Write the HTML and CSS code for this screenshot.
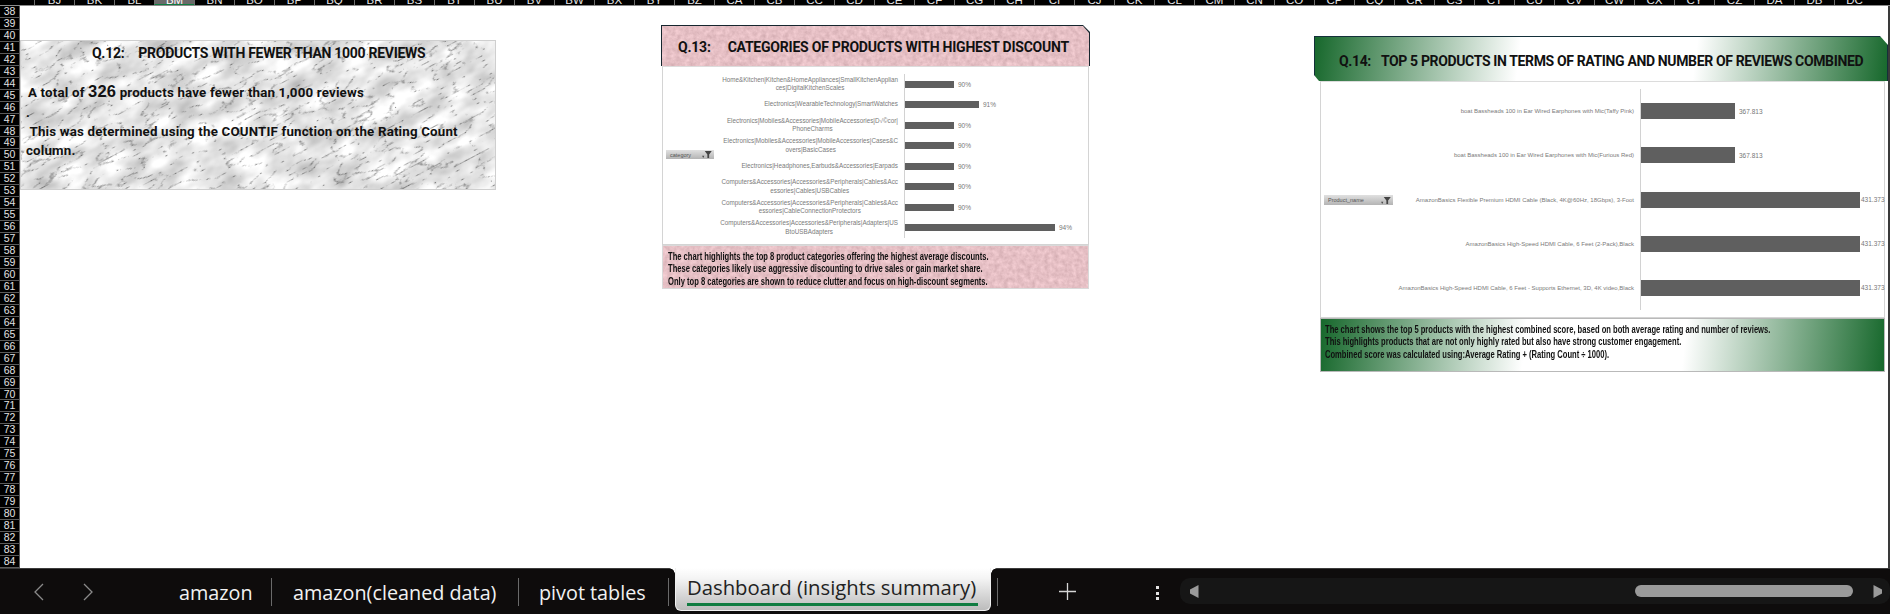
FILE: index.html
```html
<!DOCTYPE html>
<html lang="en">
<head>
<meta charset="utf-8">
<title>Dashboard (insights summary)</title>
<link rel="stylesheet" href="styles.css">
</head>
<body>
<svg class="defs" width="0" height="0" aria-hidden="true">
  <defs>
    <filter id="marble" x="0" y="0" width="100%" height="100%" color-interpolation-filters="sRGB">
      <feTurbulence type="fractalNoise" baseFrequency="0.03 0.05" numOctaves="3" seed="5" result="cloud"/>
      <feColorMatrix in="cloud" type="matrix" values="0.45 0 0 0 0.68  0.45 0 0 0 0.68  0.45 0 0 0 0.68  0 0 0 0 1" result="base"/>
      <feTurbulence type="turbulence" baseFrequency="0.04 0.1" numOctaves="4" seed="11"/>
      <feColorMatrix type="matrix" values="2.6 0 0 0 0.55  2.6 0 0 0 0.55  2.6 0 0 0 0.55  0 0 0 0 1" result="veins"/>
      <feBlend in="base" in2="veins" mode="multiply"/>
      <feGaussianBlur stdDeviation="0.5"/>
    </filter>
    <filter id="pinkgrain" x="0" y="0" width="100%" height="100%" color-interpolation-filters="sRGB">
      <feTurbulence type="fractalNoise" baseFrequency="0.22" numOctaves="3" seed="3"/>
      <feColorMatrix type="matrix" values="0.18 0 0 0 0.81  0.18 0 0 0 0.66  0.18 0 0 0 0.68  0 0 0 0 1"/>
    </filter>
  </defs>
</svg>
<div class="app">
  <div class="colhead">
    <div class="col-stub"></div>
    <span>BJ</span><span>BK</span><span>BL</span><span class="sel">BM</span><span>BN</span><span>BO</span><span>BP</span><span>BQ</span><span>BR</span><span>BS</span><span>BT</span><span>BU</span><span>BV</span><span>BW</span><span>BX</span><span>BY</span><span>BZ</span><span>CA</span><span>CB</span><span>CC</span><span>CD</span><span>CE</span><span>CF</span><span>CG</span><span>CH</span><span>CI</span><span>CJ</span><span>CK</span><span>CL</span><span>CM</span><span>CN</span><span>CO</span><span>CP</span><span>CQ</span><span>CR</span><span>CS</span><span>CT</span><span>CU</span><span>CV</span><span>CW</span><span>CX</span><span>CY</span><span>CZ</span><span>DA</span><span>DB</span><span>DC</span>
  </div>
  <div class="main">
    <div class="rowhead">
      <div>38</div><div>39</div><div>40</div><div>41</div><div>42</div><div>43</div><div>44</div><div>45</div><div>46</div><div>47</div><div>48</div><div>49</div><div>50</div><div>51</div><div>52</div><div>53</div><div>54</div><div>55</div><div>56</div><div>57</div><div>58</div><div>59</div><div>60</div><div>61</div><div>62</div><div>63</div><div>64</div><div>65</div><div>66</div><div>67</div><div>68</div><div>69</div><div>70</div><div>71</div><div>72</div><div>73</div><div>74</div><div>75</div><div>76</div><div>77</div><div>78</div><div>79</div><div>80</div><div>81</div><div>82</div><div>83</div><div>84</div>
    </div>
    <div class="sheet">

      <section class="shape q12">
        <svg class="tex" aria-hidden="true"><rect x="-150" y="-300" width="800" height="700" transform="rotate(-28)" filter="url(#marble)"/></svg>
        <h2 class="q12-title"><span>Q.12:</span><span>PRODUCTS WITH FEWER THAN 1000 REVIEWS</span></h2>
        <p class="q12-l1">A total of <b class="big">326</b> products have fewer than 1,000 reviews</p>
        <p class="q12-dot">.</p>
        <p class="q12-l2">&nbsp;This was determined using the COUNTIF function on the Rating Count column.</p>
      </section>

      <section class="shape q13">
        <div class="q13-head">
          <svg class="tex" aria-hidden="true"><rect width="100%" height="100%" filter="url(#pinkgrain)"/></svg>
          <h2 class="q13-title"><span>Q.13:</span><span>CATEGORIES OF PRODUCTS WITH HIGHEST DISCOUNT</span></h2>
        </div>
        <div class="chart chart13">
          <div class="slicer slicer13"><span>category</span>
            <svg viewBox="0 0 12 8" width="11" height="7"><path d="M0 7h4M1 5.5h2.5L2.2 8zM4 0h8L9 4v4H7V4z" fill="#444"/></svg>
          </div>
          <div class="row13"><div class="lab"><div>Home&amp;Kitchen|Kitchen&amp;HomeAppliances|SmallKitchenApplian<br>ces|DigitalKitchenScales</div></div><div class="plot"><i class="bar" style="width:49px"></i><em>90%</em></div></div>
          <div class="row13"><div class="lab"><div>Electronics|WearableTechnology|SmartWatches</div></div><div class="plot"><i class="bar" style="width:74px"></i><em>91%</em></div></div>
          <div class="row13"><div class="lab"><div>Electronics|Mobiles&amp;Accessories|MobileAccessories|D√©cor|<br>PhoneCharms</div></div><div class="plot"><i class="bar" style="width:49px"></i><em>90%</em></div></div>
          <div class="row13"><div class="lab"><div>Electronics|Mobiles&amp;Accessories|MobileAccessories|Cases&amp;C<br>overs|BasicCases</div></div><div class="plot"><i class="bar" style="width:49px"></i><em>90%</em></div></div>
          <div class="row13"><div class="lab"><div>Electronics|Headphones,Earbuds&amp;Accessories|Earpads</div></div><div class="plot"><i class="bar" style="width:49px"></i><em>90%</em></div></div>
          <div class="row13"><div class="lab"><div>Computers&amp;Accessories|Accessories&amp;Peripherals|Cables&amp;Acc<br>essories|Cables|USBCables</div></div><div class="plot"><i class="bar" style="width:49px"></i><em>90%</em></div></div>
          <div class="row13"><div class="lab"><div>Computers&amp;Accessories|Accessories&amp;Peripherals|Cables&amp;Acc<br>essories|CableConnectionProtectors</div></div><div class="plot"><i class="bar" style="width:49px"></i><em>90%</em></div></div>
          <div class="row13"><div class="lab"><div>Computers&amp;Accessories|Accessories&amp;Peripherals|Adapters|US<br>BtoUSBAdapters</div></div><div class="plot"><i class="bar" style="width:150px"></i><em>94%</em></div></div>
        </div>
        <div class="q13-foot">
          <svg class="tex" aria-hidden="true"><rect width="100%" height="100%" filter="url(#pinkgrain)"/></svg>
          <p>The chart highlights the top 8 product categories offering the highest average discounts.</p>
          <p>These categories likely use aggressive discounting to drive sales or gain market share.</p>
          <p>Only top 8 categories are shown to reduce clutter and focus on high-discount segments.</p>
        </div>
      </section>

      <section class="shape q14">
        <div class="q14-head">
          <h2 class="q14-title"><span>Q.14:</span><span>TOP 5 PRODUCTS IN TERMS OF RATING AND NUMBER OF REVIEWS COMBINED</span></h2>
        </div>
        <div class="chart chart14">
          <div class="slicer slicer14"><span>Product_name</span>
            <svg viewBox="0 0 12 8" width="11" height="7"><path d="M0 7h4M1 5.5h2.5L2.2 8zM4 0h8L9 4v4H7V4z" fill="#444"/></svg>
          </div>
          <div class="row14"><div class="lab"><div>boat Bassheads 100 in Ear Wired Earphones with Mic(Taffy Pink)</div></div><div class="plot"><i class="bar" style="width:94px"></i><em>367.813</em></div></div>
          <div class="row14"><div class="lab"><div>boat Bassheads 100 in Ear Wired Earphones with Mic(Furious Red)</div></div><div class="plot"><i class="bar" style="width:94px"></i><em>367.813</em></div></div>
          <div class="row14"><div class="lab"><div>AmazonBasics Flexible Premium HDMI Cable (Black, 4K@60Hz, 18Gbps), 3-Foot</div></div><div class="plot"><i class="bar" style="width:219px"></i><em class="tight">431.373</em></div></div>
          <div class="row14"><div class="lab"><div>AmazonBasics High-Speed HDMI Cable, 6 Feet (2-Pack),Black</div></div><div class="plot"><i class="bar" style="width:219px"></i><em class="tight">431.373</em></div></div>
          <div class="row14"><div class="lab"><div>AmazonBasics High-Speed HDMI Cable, 6 Feet - Supports Ethernet, 3D, 4K video,Black</div></div><div class="plot"><i class="bar" style="width:219px"></i><em class="tight">431.373</em></div></div>
        </div>
        <div class="q14-foot">
          <p>The chart shows the top 5 products with the highest combined score, based on both average rating and number of reviews.</p>
          <p>This highlights products that are not only highly rated but also have strong customer engagement.</p>
          <p>Combined score was calculated using:Average Rating + (Rating Count ÷ 1000).</p>
        </div>
      </section>

    </div>
  </div>
  <nav class="tabbar">
    <div class="nav-arrows">
      <svg viewBox="0 0 12 20" width="12" height="20"><path d="M10 2 2 10l8 8" fill="none" stroke="#8a8a8a" stroke-width="1.3"/></svg>
      <svg viewBox="0 0 12 20" width="12" height="20"><path d="m2 2 8 8-8 8" fill="none" stroke="#8a8a8a" stroke-width="1.3"/></svg>
    </div>
    <div class="tabs">
      <div class="tab t1">amazon</div>
      <div class="sep"></div>
      <div class="tab t2">amazon(cleaned data)</div>
      <div class="sep"></div>
      <div class="tab t3">pivot tables</div>
      <div class="sep"></div>
      <div class="tab active">Dashboard (insights summary)</div>
      <div class="sep sep-after"></div>
    </div>
    <svg class="plus" viewBox="0 0 17 17" width="17" height="17"><path d="M8.5 0v17M0 8.5h17" stroke="#d6d6d6" stroke-width="1.3"/></svg>
    <div class="kebab"><i></i><i></i><i></i></div>
    <div class="scroll">
      <svg viewBox="0 0 10 13" width="10" height="13"><path d="M9.5 0v13L1 8.5v-4z" fill="#9a9a9a"/></svg>
      <div class="thumb"></div>
      <svg viewBox="0 0 10 13" width="10" height="13"><path d="M.5 0v13L9 8.5v-4z" fill="#9a9a9a"/></svg>
    </div>
  </nav>
</div>
</body>
</html>
```
FILE: styles.css
```css
* { box-sizing: border-box; }
html, body { margin: 0; padding: 0; height: 100%; overflow: hidden; background: #fff; }
.defs { position: absolute; }
.app { width: 1890px; height: 614px; display: flex; flex-direction: column; font-family: "Liberation Sans", Arial, sans-serif; }

/* column header */
.colhead { height: 6px; flex: none; display: flex; background: #000; border-bottom: 1px solid #8c8c8c; overflow: hidden; }
.col-stub { width: 34px; flex: none; }
.colhead span { width: 40px; flex: none; height: 5px; color: #e6e6e6; font-size: 11.5px; line-height: 1px; text-align: center; border-left: 1px solid #6e6e6e; }
.colhead span.sel { background: #6a6a6a; border-bottom: 1px solid #107c41; color: #fff; }

/* body */
.main { flex: 1; display: flex; min-height: 0; border-right: 2px solid #3a3a3a; }
.rowhead { width: 20px; flex: none; background: #000; display: flex; flex-direction: column; }
.rowhead div { height: 11.96px; flex: none; color: #e2e2e2; font-size: 10.5px; line-height: 11px; text-align: center; border-bottom: 1px solid #5a5a5a; border-right: 1px solid #5a5a5a; }
.sheet { flex: 1; position: relative; background: #fff; }

.shape { position: absolute; }
.tex { position: absolute; inset: 0; width: 100%; height: 100%; display: block; }

/* Q12 */
.q12 { left: 0; top: 34px; width: 476px; height: 150px; border: 1px solid #cfcfcf; color: #111; overflow: hidden; font-family: Roboto, "Liberation Sans", sans-serif; font-weight: 700; }
.q12 > :not(.tex) { position: relative; margin: 0; }
.q12-title { display: flex; gap: 14px; padding: 3px 0 0 71px; font-size: 14px; line-height: 18px; font-weight: 700; letter-spacing: -.28px; }
.q12-l1 { padding-left: 7px; margin-top: 18px !important; font-size: 13.3px; line-height: 22px; letter-spacing: .18px; }
.big { font-size: 16.5px; font-family: "Liberation Sans", sans-serif; }
.q12-dot { padding-left: 5px; font-size: 13px; line-height: 18px; }
.q12-l2 { padding: 0 8px 0 5px; font-size: 13.3px; line-height: 19px; letter-spacing: .18px; }

/* Q13 */
.q13 { left: 641px; top: 19px; width: 429px; height: 264px; display: flex; flex-direction: column; }
.q13-head { position: relative; height: 41px; flex: none; background: #16262e; clip-path: polygon(0 0, 422px 0, 100% 7px, 100% 100%, 0 100%); overflow: hidden; }
.q13-head .tex { inset: 1px 1px 0 1px; width: 427px; height: 40px; clip-path: polygon(0 0, 421px 0, 100% 7px, 100% 100%, 0 100%); }
.q13-title { position: relative; margin: 0; display: flex; gap: 17px; padding: 13px 0 0 17px; font: 700 14px/18px Roboto, "Liberation Sans", sans-serif; color: #111; letter-spacing: -.22px; white-space: nowrap; }

.chart { position: relative; background: #fff; display: flex; flex-direction: column; border: 1px solid #d4d4d4; border-top: 1px solid #dcdcdc; flex: none; }
.chart13 { height: 179px; margin: 0 1px; padding: 7px 0 6px; }
.row13 { flex: 1; display: flex; min-height: 0; }
.lab { flex: none; display: flex; justify-content: flex-end; align-items: center; padding-right: 6px; color: #7a7a7a; white-space: nowrap; text-align: center; }
.row13 .lab { width: 241px; font-size: 6.3px; line-height: 8.7px; }
.plot { flex: 1; display: flex; align-items: center; border-left: 1px solid #d2d2d2; font-size: 6.5px; color: #777; }
.bar { display: block; background: #5f5f5f; flex: none; }
.row13 .bar { height: 7px; }
.plot em { font-style: normal; margin-left: 4px; }
.plot em.tight { margin-left: 1px; }

.slicer { position: absolute; display: flex; justify-content: space-between; align-items: center; background: linear-gradient(#e0e0e0, #b4b4b4); color: #555; font-size: 5.5px; padding: 0 2px 0 4px; }
.slicer13 { left: 3px; top: 83px; width: 48px; height: 9px; }
.slicer14 { left: 3px; top: 113px; width: 69px; height: 10px; }

.q13-foot { position: relative; flex: 1; margin: 0 1px; border: 1px solid #d9d9d9; padding: 4px 0 0 5px; overflow: hidden; }
.q13-foot p, .q14-foot p { position: relative; margin: 0; font-family: "Liberation Sans", sans-serif; font-weight: 700; color: #111; white-space: nowrap; line-height: 12.4px; font-size: 11px; transform: scaleX(.69); transform-origin: 0 0; }

/* Q14 */
.q14 { left: 1294px; top: 30px; width: 574px; height: 336px; display: flex; flex-direction: column; }
.q14-head { height: 45px; flex: none; background: linear-gradient(97deg, #17682c 0, #fff 205px, #fff 380px, #17682c 100%); border: 1px solid #14303a; border-bottom: 0; clip-path: polygon(0 0, 566px 0, 100% 9px, 100% 100%, 5px 100%, 0 39px); }
.q14-title { margin: 0; display: flex; gap: 10px; padding: 15px 0 0 24px; font: 700 14px/18px Roboto, "Liberation Sans", sans-serif; color: #111; white-space: nowrap; letter-spacing: -.36px; }
.chart14 { height: 237px; margin: 0 3px 0 6px; padding: 7px 0; }
.row14 { flex: 1; display: flex; min-height: 0; }
.row14 .lab { width: 319px; font-size: 6px; line-height: 8px; }
.row14 .bar { height: 16px; }
.q14-foot { position: relative; flex: 1; margin: 0 3px 0 6px; border: 1px solid #b9b9b9; padding: 4px 0 0 4px; overflow: hidden; background: linear-gradient(96deg, #17682c 0, #fff 205px, #fff 364px, #17682c 100%); }

/* tab bar */
.tabbar { position: relative; height: 46px; flex: none; background: #0e0c0c; border-top: 1px solid #3c3c3c; display: flex; align-items: flex-start; color: #f2f2f2; }
.nav-arrows { width: 133px; flex: none; display: flex; gap: 37px; padding: 13px 0 0 33px; }
.tabs { flex: none; display: flex; align-items: flex-start; height: 45px; }
.tab { font-family: "Open Sans", "Noto Sans", sans-serif; font-size: 19.8px; line-height: 26px; white-space: nowrap; padding-top: 11px; }
.t1 { padding-left: 46px; width: 138px; }
.t2 { width: 246px; padding-left: 21px; }
.t3 { width: 149px; padding-left: 20px; }
.sep { width: 1px; height: 28px; background: #6a6a6a; margin-top: 9px; flex: none; }
.tab.active { margin: -1px 0 0 6px; width: 316px; height: 43px; padding: 6px 0 0 11px; font-size: 20.3px; color: #222; background: linear-gradient(#fff 0, #f4f4f4 25%, #bcbcbc 100%); border: 1px solid #f0f0f0; border-top: 0; border-radius: 0 0 6px 6px; position: relative; }
.tab.active::before { content: ""; position: absolute; left: -7px; right: -7px; top: 0; height: 6px; background: radial-gradient(circle at 0 100%, transparent 5.5px, #fff 6px) left top / 6px 6px no-repeat, radial-gradient(circle at 100% 100%, transparent 5.5px, #fff 6px) right top / 6px 6px no-repeat; }
.tab.active::after { content: ""; position: absolute; left: 11px; right: 12px; top: 35px; height: 3px; background: #107c41; }
.sep-after { margin-left: 6px; }
.plus { flex: none; margin: 14px 0 0 61px; }
.kebab { flex: none; width: 4px; margin: 17px 0 0 80px; display: flex; flex-direction: column; gap: 2.5px; }
.kebab i { display: block; width: 3px; height: 3px; background: #e4e4e4; }
.scroll { position: absolute; left: 1180px; right: 0; top: 9px; height: 26px; background: #161616; border-radius: 10px; display: flex; align-items: center; padding: 0 7px 0 9px; }
.thumb { width: 218px; height: 12px; margin: 0 20px 0 436px; background: #9a9a9a; border-radius: 6px; }
```
